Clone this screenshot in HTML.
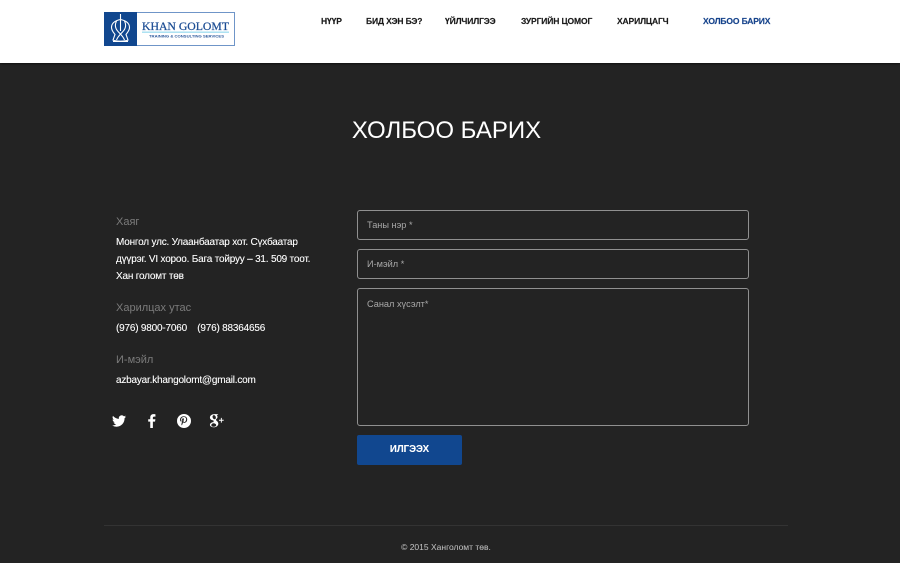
<!DOCTYPE html>
<html><head><meta charset="utf-8">
<style>
html,body{margin:0;padding:0;width:900px;height:563px;overflow:hidden;background:#232323;font-family:"Liberation Sans",Arial,sans-serif}
.a{position:absolute;white-space:nowrap}
#hdr{position:absolute;left:0;top:0;width:900px;height:63px;background:#fff;box-shadow:0 1px 2px rgba(0,0,0,.5)}
.n{top:16px;font-size:8.5px;letter-spacing:-.13px;line-height:11px;font-weight:bold;color:#1a1a1a;-webkit-text-stroke:.15px #1a1a1a}
.l{left:116px;font-size:11px;line-height:16px;color:#7b7b7b}
.t{left:116px;font-size:10px;letter-spacing:-.2px;line-height:17px;color:#fff;-webkit-text-stroke:.1px #fff}
.f{position:absolute;left:357px;width:390px;border:1px solid #909090;border-radius:3px;box-sizing:content-box}
.p{left:367px;font-size:9.2px;line-height:12px;color:#a8a8a8}
</style></head><body>
<div id="hdr"></div>
<svg class="a" style="left:104px;top:12px" width="131" height="34" viewBox="0 0 131 34">
<rect x=".5" y=".5" width="130" height="33" fill="#fff" stroke="#6f95c8"/>
<rect x="0" y="0" width="33" height="34" fill="#11478f"/>
<g fill="none" stroke="#fff" stroke-width="1.100">
<path d="M16.500 2v6"/>
<path d="M16.500 7.500c-5 1-9 3.500-9 8 0 3 2 5 3.500 7l-2 5.500c2 1.500 13 1.500 15 0l-2-5.500c1.500-2 3.500-4 3.500-7 0-4.500-4-7-9-8z"/>
<path d="M12.500 9c-2 4-1 8 2 11 3 3 5 5 6 8M20.500 9c2 4 1 8-2 11-3 3-5 5-6 8M16.500 8v11M9 29.500h15"/>
</g>
<rect x="38" y="19.500" width="87" height="1.400" fill="#a6dff0"/>
<text x="38" y="18" font-family="Liberation Serif,serif" font-size="12" fill="#1c4d94" stroke="#1c4d94" stroke-width=".25" textLength="87" lengthAdjust="spacingAndGlyphs">KHAN GOLOMT</text>
<text x="45" y="25.500" font-family="Liberation Sans,sans-serif" font-size="4" font-weight="bold" fill="#2d5a9c" textLength="75" lengthAdjust="spacingAndGlyphs">TRAINING &amp; CONSULTING SERVICES</text>
</svg>
<div class="a n" style="left:321px">НҮҮР</div>
<div class="a n" style="left:366px">БИД ХЭН БЭ?</div>
<div class="a n" style="left:445px">ҮЙЛЧИЛГЭЭ</div>
<div class="a n" style="left:521px">ЗУРГИЙН ЦОМОГ</div>
<div class="a n" style="left:617px">ХАРИЛЦАГЧ</div>
<div class="a n" style="left:703px;color:#17448c;-webkit-text-stroke:.15px #17448c">ХОЛБОО БАРИХ</div>

<div class="a" style="left:0;width:893px;text-align:center;top:116px;font-size:24px;line-height:30px;color:#fff">ХОЛБОО БАРИХ</div>

<div class="a l" style="top:214px">Хаяг</div>
<div class="a t" style="top:234px">Монгол улс. Улаанбаатар хот. Сүхбаатар</div>
<div class="a t" style="top:251px">дүүрэг. VI хороо. Бага тойруу – 31. 509 тоот.</div>
<div class="a t" style="top:268px">Хан голомт төв</div>
<div class="a l" style="top:300px">Харилцах утас</div>
<div class="a t" style="top:320px">(976) 9800-7060 &nbsp;&nbsp; (976) 88364656</div>
<div class="a l" style="top:352px">И-мэйл</div>
<div class="a t" style="top:372px">azbayar.khangolomt@gmail.com</div>

<svg class="a" style="left:112px;top:414px" width="14" height="14" viewBox="0 0 24 24"><path fill="#fff" d="M24 4.600a10 10 0 0 1-2.800.8 5 5 0 0 0 2.200-2.700 10 10 0 0 1-3.100 1.200 4.900 4.900 0 0 0-8.400 4.500A14 14 0 0 1 1.700 3.200a4.900 4.900 0 0 0 1.500 6.600 5 5 0 0 1-2.200-.6c0 2.400 1.700 4.400 3.900 4.900a5 5 0 0 1-2.200.1 4.900 4.900 0 0 0 4.600 3.400A10 10 0 0 1 0 19.600 14 14 0 0 0 7.500 21.800c9.100 0 14.300-7.700 14-14.600A10 10 0 0 0 24 4.600z"/></svg>
<svg class="a" style="left:145px;top:413px" width="14" height="16" viewBox="0 0 24 24"><path fill="#fff" d="M9 24V13H5.500V9H9V6c0-3.700 2.200-5.700 5.500-5.700 1.600 0 3 .1 3.400.2v3.900h-2.300c-1.800 0-2.100.9-2.100 2.100V9h4.300l-.6 4h-3.700v11z"/></svg>
<svg class="a" style="left:177px;top:414px" width="14" height="14" viewBox="0 0 24 24"><path fill="#fff" fill-rule="evenodd" d="M12 0a12 12 0 1 0 0 24 12 12 0 0 0 0-24zM12.600 15.200c-1 0-1.900-.5-2.200-1.100l-.7 2.500c-.3 1-1 2.300-1.500 3-.9-.5-.6-2.300-.4-3.200l1.200-5.200s-.3-.6-.3-1.500c0-1.400.8-2.500 1.900-2.500.9 0 1.300.7 1.300 1.400 0 .9-.6 2.200-.8 3.400-.2 1 .5 1.800 1.500 1.800 1.800 0 3-2.300 3-5 0-2.100-1.400-3.600-3.900-3.600-2.800 0-4.600 2.100-4.600 4.500 0 .8.200 1.400.6 1.800.2.200.2.300.1.600l-.2.700c-.1.300-.3.400-.5.300-1.300-.5-1.900-1.900-1.900-3.500 0-2.600 2.200-5.700 6.500-5.700 3.500 0 5.800 2.500 5.800 5.200 0 3.600-2 6.100-4.900 6.100z"/></svg>
<svg class="a" style="left:209px;top:413px" width="15" height="16" viewBox="0 0 24 24"><path fill="#fff" fill-rule="evenodd" d="M9 1h6l-1.500 1.200h-1.400c1 .8 1.500 2 1.500 3.300 0 2.400-2.500 3.200-2.500 4.700 0 1.300 3.800 2.400 3.800 6 0 3.700-3.500 5.800-7 5.800-3.400 0-6.400-1.400-6.400-4 0-2.700 3.100-4.300 6.300-4.300-.5-.6-.8-1.200-.8-2 0-.3.100-.6.200-.9C3.500 11 1.500 8.800 1.500 6.200 1.500 3.300 4.800 1 9 1zM7.800 2.500c-1.500 0-2.400 1.400-2.100 3.300.3 1.900 1.700 3.400 3.200 3.400 1.500 0 2.300-1.400 2-3.300C10.600 4 9.300 2.500 7.800 2.500zM8 15.500c-2.300 0-4.300 1.200-4.300 3 0 1.700 1.700 2.700 3.900 2.700 2.600 0 3.900-1.100 3.900-2.600 0-1.500-1.300-2.400-3.500-3.100z"/><path fill="#fff" d="M19 7v3h-3v1.500h3v3h1.500v-3h3V10h-3V7z"/></svg>

<div class="f" style="top:210px;height:28px"></div>
<div class="a p" style="top:219px">Таны нэр *</div>
<div class="f" style="top:249px;height:28px"></div>
<div class="a p" style="top:258px">И-мэйл *</div>
<div class="f" style="top:288px;height:136px"></div>
<div class="a p" style="top:298px">Санал хүсэлт*</div>
<div class="a" style="left:357px;top:435px;width:105px;height:30px;background:#11478f;border-radius:2px;color:#fff;font-size:9.700px;font-weight:bold;line-height:29px;text-align:center;-webkit-text-stroke:.1px #fff">ИЛГЭЭХ</div>

<div class="a" style="left:104px;top:525px;width:684px;height:1px;background:#333"></div>
<div class="a" style="left:0;width:892px;text-align:center;top:541px;font-size:8.500px;line-height:12px;color:#c4c4c4">© 2015 Ханголомт төв.</div>
</body></html>
